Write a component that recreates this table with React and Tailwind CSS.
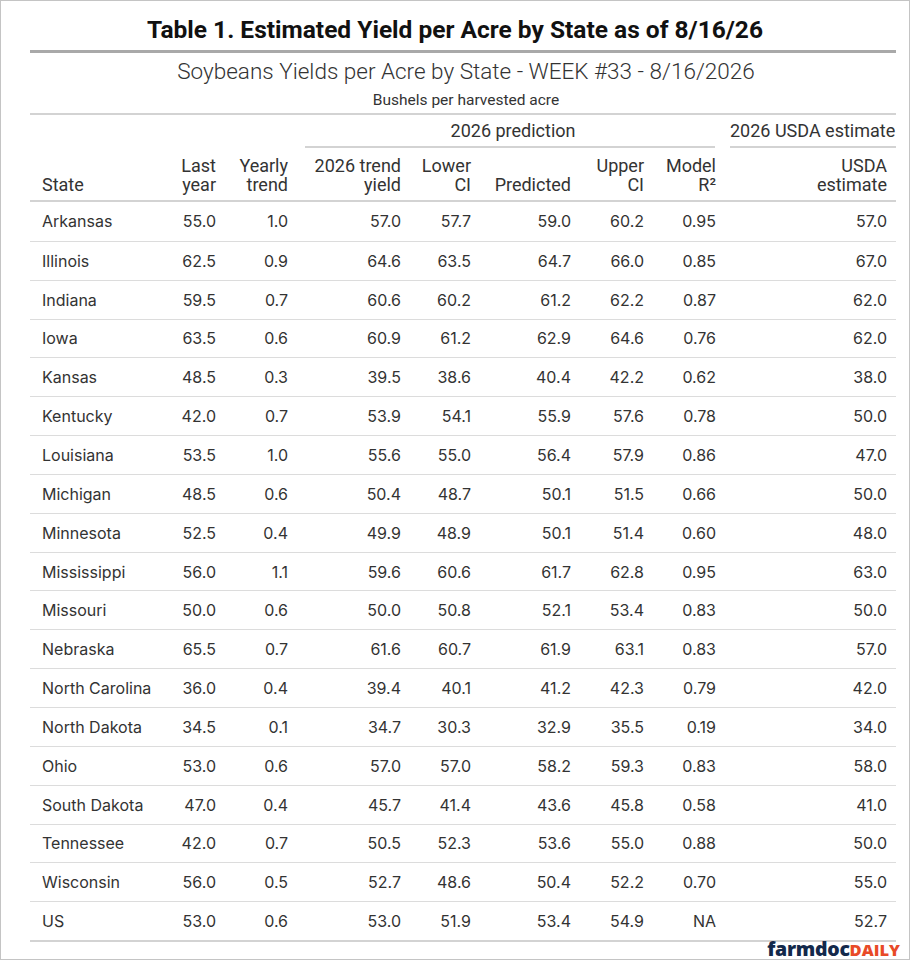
import React from 'react'

// Таблица урожайности сои по штатам (gt-style)
const rows = [
  ['Arkansas', '55.0', '1.0', '57.0', '57.7', '59.0', '60.2', '0.95', '57.0'],
  ['Illinois', '62.5', '0.9', '64.6', '63.5', '64.7', '66.0', '0.85', '67.0'],
  ['Indiana', '59.5', '0.7', '60.6', '60.2', '61.2', '62.2', '0.87', '62.0'],
  ['Iowa', '63.5', '0.6', '60.9', '61.2', '62.9', '64.6', '0.76', '62.0'],
  ['Kansas', '48.5', '0.3', '39.5', '38.6', '40.4', '42.2', '0.62', '38.0'],
  ['Kentucky', '42.0', '0.7', '53.9', '54.1', '55.9', '57.6', '0.78', '50.0'],
  ['Louisiana', '53.5', '1.0', '55.6', '55.0', '56.4', '57.9', '0.86', '47.0'],
  ['Michigan', '48.5', '0.6', '50.4', '48.7', '50.1', '51.5', '0.66', '50.0'],
  ['Minnesota', '52.5', '0.4', '49.9', '48.9', '50.1', '51.4', '0.60', '48.0'],
  ['Mississippi', '56.0', '1.1', '59.6', '60.6', '61.7', '62.8', '0.95', '63.0'],
  ['Missouri', '50.0', '0.6', '50.0', '50.8', '52.1', '53.4', '0.83', '50.0'],
  ['Nebraska', '65.5', '0.7', '61.6', '60.7', '61.9', '63.1', '0.83', '57.0'],
  ['North Carolina', '36.0', '0.4', '39.4', '40.1', '41.2', '42.3', '0.79', '42.0'],
  ['North Dakota', '34.5', '0.1', '34.7', '30.3', '32.9', '35.5', '0.19', '34.0'],
  ['Ohio', '53.0', '0.6', '57.0', '57.0', '58.2', '59.3', '0.83', '58.0'],
  ['South Dakota', '47.0', '0.4', '45.7', '41.4', '43.6', '45.8', '0.58', '41.0'],
  ['Tennessee', '42.0', '0.7', '50.5', '52.3', '53.6', '55.0', '0.88', '50.0'],
  ['Wisconsin', '56.0', '0.5', '52.7', '48.6', '50.4', '52.2', '0.70', '55.0'],
  ['US', '53.0', '0.6', '53.0', '51.9', '53.4', '54.9', 'NA', '52.7'],
]

const cols = 'grid grid-cols-[140px_51px_72px_113px_70px_100px_73px_72px_175px]'

const headers = [
  ['State'],
  ['Last', 'year'],
  ['Yearly', 'trend'],
  ['2026 trend', 'yield'],
  ['Lower', 'CI'],
  ['Predicted'],
  ['Upper', 'CI'],
  ['Model', 'R²'],
  ['USDA', 'estimate'],
]

function Cell({ value, first, last }) {
  if (first) return <div className="pl-[12px] flex items-center">{value}</div>
  return (
    <div className={`flex items-center justify-end ${last ? 'pr-[9px]' : 'pr-[5px]'}`}>
      {value}
    </div>
  )
}

export default function App() {
  return (
    <div className="w-[910px] h-[960px] bg-white border border-[#c4c4c4] overflow-hidden text-[#333]">
      <h1 className="pt-[15px] h-[49px] text-center text-[24.5px] leading-[28px] font-bold text-[#111] font-['Roboto',sans-serif] whitespace-nowrap">
        Table 1. Estimated Yield per Acre by State as of 8/16/26
      </h1>

      <div className="ml-[29px] w-[866px] overflow-hidden whitespace-nowrap">
        <div className="border-t-[3px] border-[#a9a9a9] h-[63px] pt-[5px] flex flex-col items-center font-['Roboto',sans-serif] pl-[6px]">
          <div className="text-[22.5px] leading-[26px] font-light text-[#333]">
            Soybeans Yields per Acre by State - WEEK #33 - 8/16/2026
          </div>
          <div className="mt-[7px] text-[15.5px] leading-[18px] text-[#333]">Bushels per harvested acre</div>
        </div>

        <div className="border-t-2 border-[#d3d3d3] font-['Roboto',sans-serif] text-[18px] leading-[19px]">
          <div className={`${cols} h-[33px]`}>
            <div className="col-span-3" />
            <div className="col-span-5 flex flex-col">
              <div className="pt-[6px] h-[24px] text-center pl-[12px]">2026 prediction</div>
              <div className="ml-[12px] mr-[6px] mt-[7px] border-t-2 border-[#d3d3d3]" />
            </div>
            <div className="flex flex-col">
              <div className="pt-[6px] h-[24px] pl-[9px]">2026 USDA estimate</div>
              <div className="ml-[9px] mt-[7px] border-t-2 border-[#d3d3d3]" />
            </div>
          </div>
          <div className={`${cols} h-[52px] pb-[6px]`}>
            {headers.map((h, i) => (
              <div
                key={i}
                className={`flex flex-col justify-end ${i === 0 ? 'pl-[12px] items-start' : i === 8 ? 'pr-[9px] items-end text-right' : 'pr-[5px] items-end text-right'}`}
              >
                {h.map(line => <div key={line}>{line}</div>)}
              </div>
            ))}
          </div>
        </div>

        <div className="border-t-2 border-b-2 border-[#d3d3d3] font-['Inter',sans-serif] text-[16px]">
          {rows.map((r, i) => (
            <div key={r[0]} className={`${cols} h-[38.85px] ${i > 0 ? 'border-t border-[#dcdcdc]' : ''}`}>
              {r.map((v, j) => (
                <Cell key={j} value={v} first={j === 0} last={j === 8} />
              ))}
            </div>
          ))}
        </div>
      </div>

      <div className="flex justify-end items-baseline pr-[9px] -mt-[1px] font-['Open_Sans',sans-serif] font-extrabold leading-[15px]">
        <span className="text-[19.5px] text-[#13294b] tracking-[-0.3px]">farmdoc</span>
        <span className="text-[16.5px] text-[#e84a27]">DAILY</span>
      </div>
    </div>
  )
}
